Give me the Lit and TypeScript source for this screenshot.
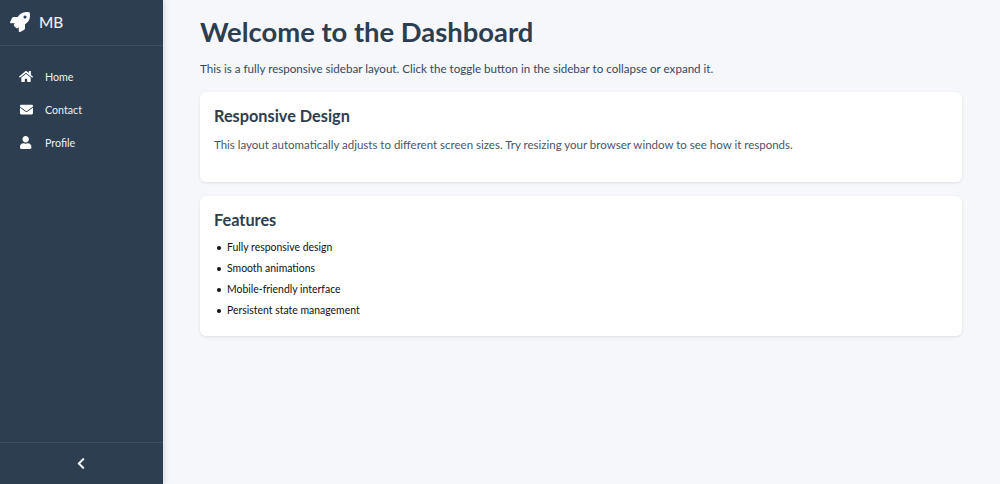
import { LitElement, html, css, svg } from "lit";
import { customElement } from "lit/decorators.js";

const ico = (vb: string, d: string, cls: string) =>
  html`<svg class=${cls} viewBox=${vb} fill="currentColor" aria-hidden="true">${svg`<path d=${d}></path>`}</svg>`;

const ROCKET = "M505.12 19.09c-1.19-5.53-6.66-11-12.21-12.18C460.72 0 435.51 0 410.41 0 307.18 0 245.27 55.2 199.05 128H94.84c-16.35.02-35.56 11.88-42.89 26.48L2.52 253.3A28.4 28.4 0 0 0 0 264a24 24 0 0 0 24.01 24h103.81l-22.48 22.47c-11.36 11.36-13 32.26 0 45.25l50.91 50.91c11.16 11.19 32.16 13.16 45.28 0l22.47-22.47V488a24 24 0 0 0 24.01 24 28.56 28.56 0 0 0 10.7-2.52l98.73-49.39c14.63-7.3 26.51-26.5 26.51-42.86V312.8c72.6-46.32 128.03-108.41 128.03-211.1.01-25.2.01-50.4-6.95-82.61zM384.04 168a40 40 0 1 1 40.01-40 40.02 40.02 0 0 1-40.01 40z";
const HOME = "M280.37 148.26L96 300.11V464a16 16 0 0 0 16 16l112.06-.29a16 16 0 0 0 15.92-16V368a16 16 0 0 1 16-16h64a16 16 0 0 1 16 16v95.64a16 16 0 0 0 16 16.05L464 480a16 16 0 0 0 16-16V300L295.67 148.26a12.19 12.19 0 0 0-15.3 0zM571.6 251.47L488 182.56V44.05a12 12 0 0 0-12-12h-56a12 12 0 0 0-12 12v72.61L318.47 43a48 48 0 0 0-61 0L4.34 251.47a12 12 0 0 0-1.6 16.9l25.5 31A12 12 0 0 0 45.15 301l235.22-193.74a12.19 12.19 0 0 1 15.3 0L530.9 301a12 12 0 0 0 16.9-1.6l25.5-31a12 12 0 0 0-1.7-16.93z";
const MAIL = "M502.3 190.8c3.9-3.1 9.7-.2 9.7 4.7V400c0 26.5-21.5 48-48 48H48c-26.5 0-48-21.5-48-48V195.6c0-5 5.7-7.8 9.7-4.7 22.4 17.4 52.1 39.5 154.1 113.6 21.1 15.4 56.7 47.8 92.2 47.6 35.7.3 72-32.8 92.3-47.6 102-74.1 131.6-96.3 154-113.7zM256 320c23.2.4 56.6-29.2 73.4-41.4 132.7-96.3 142.8-104.7 173.4-128.7 5.8-4.5 9.2-11.5 9.2-18.9v-19c0-26.5-21.5-48-48-48H48C21.5 64 0 85.5 0 112v19c0 7.4 3.4 14.3 9.2 18.9 30.6 23.9 40.7 32.4 173.4 128.7 16.8 12.2 50.2 41.8 73.4 41.4z";
const USER = "M224 256c70.7 0 128-57.3 128-128S294.7 0 224 0 96 57.3 96 128s57.3 128 128 128zm89.6 32h-16.7c-22.2 10.2-46.9 16-72.9 16s-50.6-5.8-72.9-16h-16.7C60.2 288 0 348.2 0 422.4V464c0 26.5 21.5 48 48 48h352c26.5 0 48-21.5 48-48v-41.6c0-74.2-60.2-134.4-134.4-134.4z";
const CHEV = "M34.52 239.03L228.87 44.69c9.37-9.37 24.57-9.37 33.94 0l22.67 22.67c9.36 9.36 9.37 24.52.04 33.9L131.49 256l154.02 154.75c9.34 9.38 9.32 24.54-.04 33.9l-22.67 22.67c-9.37 9.37-24.57 9.37-33.94 0L34.52 272.97c-9.37-9.37-9.37-24.57 0-33.94z";

@customElement("app-root")
export class AppRoot extends LitElement {
  static styles = css`
    :host { display: flex; width: 1000px; height: 484px; overflow: hidden; background: #f5f7fb; font-family: "Lato", sans-serif; }
    .side { width: 163px; flex: none; background: #2c3e50; color: #ecf0f1; display: flex; flex-direction: column; box-shadow: 2px 0 5px rgba(0,0,0,.1); }
    .brand { height: 46px; box-sizing: border-box; border-bottom: 1px solid rgba(255,255,255,.1); display: flex; align-items: center; padding: 0 0 1px 10px; gap: 9px; }
    .brand span { font-size: 15.4px; font-weight: 500; line-height: 18px; padding-bottom: 1px; }
    .rocket { width: 20px; height: 20px; color: #fff; }
    nav { flex: 1; padding-top: 14px; display: flex; flex-direction: column; }
    .item { height: 33px; display: flex; align-items: center; padding-left: 19px; font-size: 10.7px; }
    .slot { width: 14px; margin-right: 12px; display: flex; justify-content: center; color: #fff; }
    .slot svg { height: 13px; }
    .foot { height: 42px; box-sizing: border-box; border-top: 1px solid rgba(255,255,255,.1); display: flex; align-items: center; padding-left: 77px; }
    .chev { height: 13px; width: 8px; color: #ecf0f1; }
    main { flex: 1; padding: 16px 38px 0 37px; color: #2c3e50; min-width: 0; }
    h1 { margin: 0 0 13px; font-size: 27.4px; line-height: 32px; font-weight: 700; }
    .lead { margin: 0 0 15px; font-size: 11.6px; line-height: 16px; color: #34495e; }
    .card { background: #fff; border-radius: 6px; box-shadow: 0 1px 3px rgba(0,0,0,.1); padding: 14px; margin-bottom: 14px; }
    h2 { margin: 0 0 12px; font-size: 16.3px; line-height: 19px; font-weight: 700; }
    .card p { margin: 0 0 15px; font-size: 11.5px; line-height: 16px; color: #4a5568; }
    ul { list-style: none; margin: -1px 0 0; padding: 0 0 4px 3px; color: #111; font-size: 10.45px; }
    li { display: flex; align-items: center; gap: 6px; line-height: 15px; margin-bottom: 6px; }
    li::before { content: ""; width: 4px; height: 4px; border-radius: 50%; background: #111; flex: none; }
    li:last-child { margin-bottom: 0; }
  `;

  render() {
    const items: [string, string, string][] = [["Home", "0 0 576 512", HOME], ["Contact", "0 0 512 512", MAIL], ["Profile", "0 0 448 512", USER]];
    return html`
      <aside class="side">
        <div class="brand">${ico("0 0 512 512", ROCKET, "rocket")}<span>MB</span></div>
        <nav>
          ${items.map(([t, vb, d]) => html`<div class="item"><span class="slot">${ico(vb, d, "")}</span>${t}</div>`)}
        </nav>
        <div class="foot">${ico("0 0 320 512", CHEV, "chev")}</div>
      </aside>
      <main>
        <h1>Welcome to the Dashboard</h1>
        <p class="lead">This is a fully responsive sidebar layout. Click the toggle button in the sidebar to collapse or expand it.</p>
        <section class="card">
          <h2>Responsive Design</h2>
          <p>This layout automatically adjusts to different screen sizes. Try resizing your browser window to see how it responds.</p>
        </section>
        <section class="card">
          <h2>Features</h2>
          <ul>
            <li>Fully responsive design</li>
            <li>Smooth animations</li>
            <li>Mobile-friendly interface</li>
            <li>Persistent state management</li>
          </ul>
        </section>
      </main>
    `;
  }
}
